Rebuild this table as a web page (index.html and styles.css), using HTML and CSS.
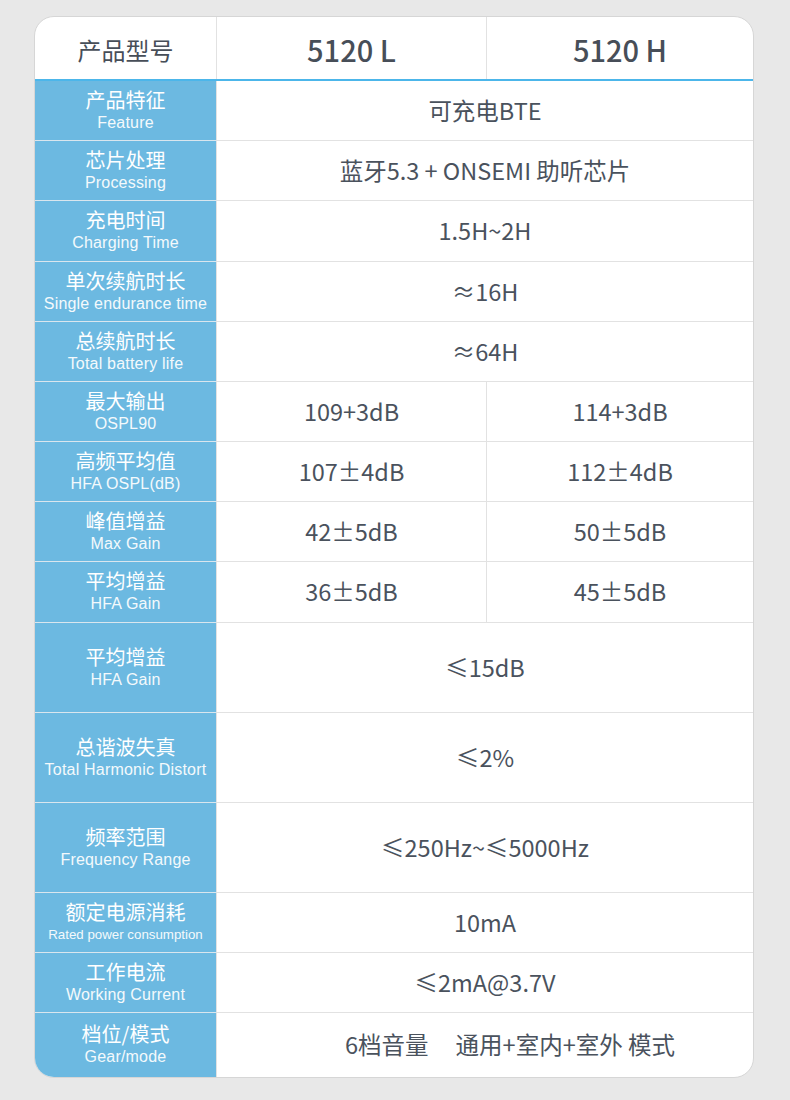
FILE: index.html
```html
<!DOCTYPE html>
<html lang="zh">
<head>
<meta charset="utf-8">
<link rel="stylesheet" href="styles.css">
</head>
<body>
<div class="card">
  <div class="row head">
    <div class="hcell hlabel">产品型号</div>
    <div class="hcell model">5120 L</div>
    <div class="hcell model last">5120 H</div>
  </div>
  <div class="row">
    <div class="label"><span class="zh">产品特征</span><span class="en">Feature</span></div>
    <div class="val span">可充电BTE</div>
  </div>
  <div class="row">
    <div class="label"><span class="zh">芯片处理</span><span class="en">Processing</span></div>
    <div class="val span">蓝牙5.3 + ONSEMI 助听芯片</div>
  </div>
  <div class="row plus">
    <div class="label"><span class="zh">充电时间</span><span class="en">Charging Time</span></div>
    <div class="val span">1.5H~2H</div>
  </div>
  <div class="row">
    <div class="label"><span class="zh">单次续航时长</span><span class="en">Single endurance time</span></div>
    <div class="val span">≈16H</div>
  </div>
  <div class="row">
    <div class="label"><span class="zh">总续航时长</span><span class="en">Total battery life</span></div>
    <div class="val span">≈64H</div>
  </div>
  <div class="row">
    <div class="label"><span class="zh">最大输出</span><span class="en">OSPL90</span></div>
    <div class="val">109+3dB</div>
    <div class="val last">114+3dB</div>
  </div>
  <div class="row">
    <div class="label"><span class="zh">高频平均值</span><span class="en">HFA OSPL(dB)</span></div>
    <div class="val">107±4dB</div>
    <div class="val last">112±4dB</div>
  </div>
  <div class="row">
    <div class="label"><span class="zh">峰值增益</span><span class="en">Max Gain</span></div>
    <div class="val">42±5dB</div>
    <div class="val last">50±5dB</div>
  </div>
  <div class="row plus">
    <div class="label"><span class="zh">平均增益</span><span class="en">HFA Gain</span></div>
    <div class="val">36±5dB</div>
    <div class="val last">45±5dB</div>
  </div>
  <div class="row tall">
    <div class="label"><span class="zh">平均增益</span><span class="en">HFA Gain</span></div>
    <div class="val span">≤15dB</div>
  </div>
  <div class="row tall">
    <div class="label"><span class="zh">总谐波失真</span><span class="en">Total Harmonic Distort</span></div>
    <div class="val span">≤2%</div>
  </div>
  <div class="row tall">
    <div class="label"><span class="zh">频率范围</span><span class="en">Frequency Range</span></div>
    <div class="val span">≤250Hz~≤5000Hz</div>
  </div>
  <div class="row">
    <div class="label"><span class="zh">额定电源消耗</span><span class="en small">Rated power consumption</span></div>
    <div class="val span">10mA</div>
  </div>
  <div class="row">
    <div class="label"><span class="zh">工作电流</span><span class="en">Working Current</span></div>
    <div class="val span">≤2mA@3.7V</div>
  </div>
  <div class="row final">
    <div class="label"><span class="zh">档位/模式</span><span class="en">Gear/mode</span></div>
    <div class="val span shifted"><span class="gear">6档音量</span><span>通用+室内+室外 模式</span></div>
  </div>
</div>
</body>
</html>
```

FILE: styles.css
```css
html, body {
  margin: 0;
  padding: 0;
  background: #e8e8e8;
}
body {
  padding: 16px 36px 22px 34px;
  font-family: "Noto Sans CJK SC", "Noto Sans", sans-serif;
}
.card {
  background: #ffffff;
  border: 1px solid #d6d6d6;
  border-radius: 20px;
  overflow: hidden;
  display: flex;
  flex-direction: column;
}
.row {
  box-sizing: border-box;
  display: grid;
  grid-template-columns: 182px 270px 1fr;
  height: 60px;
  border-bottom: 1px solid #e2e2e2;
}
.row.plus {
  height: 61px;
}
.row.tall {
  height: 90px;
}
.row.final {
  height: 64px;
  border-bottom: none;
}
.row.head {
  height: 64px;
  border-bottom: 2px solid #4cb6ea;
}
.hcell {
  display: flex;
  align-items: center;
  justify-content: center;
  color: #474e58;
  border-right: 1px solid #e2e2e2;
}
.hcell.last, .val.last {
  border-right: none;
}
.hlabel {
  font-size: 24px;
  padding-top: 2px;
}
.model {
  font-size: 29px;
  font-weight: 500;
  padding-top: 2px;
}
.label {
  background: #6cb9e1;
  color: #ffffff;
  display: flex;
  flex-direction: column;
  align-items: center;
  justify-content: center;
  border-right: 1px solid #e2e2e2;
  margin-bottom: -1px;
  border-bottom: 1px solid #d9e6ee;
  padding-bottom: 1px;
}
.row.final .label {
  margin-bottom: 0;
  border-bottom: none;
}
.zh {
  font-size: 20px;
  line-height: 24px;
}
.en {
  font-family: "Liberation Sans", Arial, sans-serif;
  font-size: 16px;
  line-height: 20px;
  margin-top: 1px;
  letter-spacing: 0.2px;
  color: #f4f9fc;
}
.en.small {
  font-size: 13.3px;
  letter-spacing: 0;
}
.val {
  display: flex;
  align-items: center;
  justify-content: center;
  font-size: 23.5px;
  color: #4a525d;
  border-right: 1px solid #e2e2e2;
  padding-bottom: 2px;
}
.val.span {
  grid-column: 2 / 4;
  border-right: none;
}
.val.shifted {
  padding-left: 50px;
}
.gear {
  margin-right: 27px;
}
```
